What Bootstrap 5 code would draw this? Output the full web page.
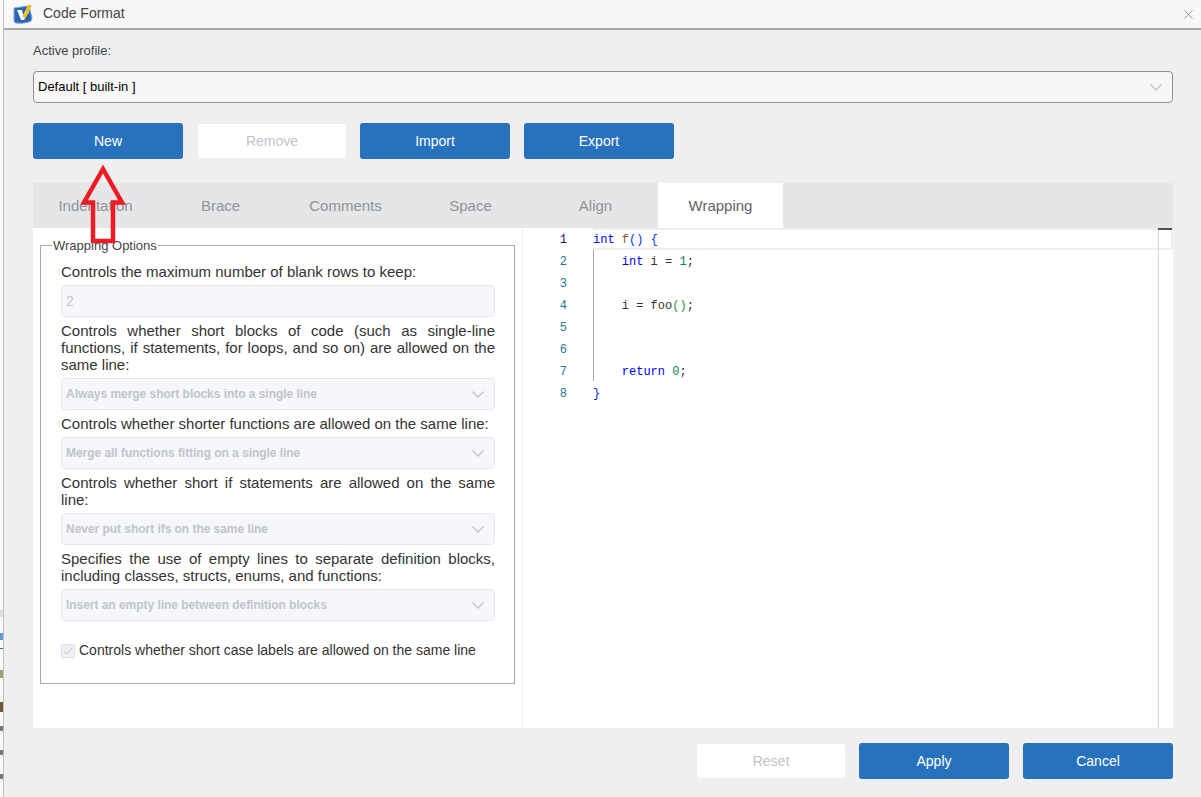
<!DOCTYPE html>
<html lang="en">

<head>
  <meta charset="UTF-8">
  <meta name="viewport" content="width=device-width, initial-scale=1.0">
  <title>Code Format</title>
  <link href="https://cdn.jsdelivr.net/npm/bootstrap@5.3.0/dist/css/bootstrap.min.css" rel="stylesheet">
  <style>
    html, body { height: 797px; overflow: hidden; }
    body { font-family: "Liberation Sans", Arial, sans-serif; font-size: 14px; color: #333; background: #fff; }
    .back-strip { width: 3px; height: 797px; flex: none; background: #fafafa; position: relative; }
    .back-strip div { position: absolute; left: 0; width: 3px; }
    .bit-band { top: 610px; height: 7px; background: #dcdcdc; }
    .bit-link { top: 633px; height: 7px; background: #5b9bd5; }
    .bit-rule { top: 648px; height: 1px; background: #2872bd; }
    .bit-tan { top: 670px; height: 8px; background: #a89a70; }
    .bit-dark { top: 702px; height: 10px; background: #6b5a3a; }
    .bit-c1 { top: 726px; height: 5px; background: #777; }
    .bit-c2 { top: 750px; height: 5px; background: #777; }
    .bit-c3 { top: 774px; height: 5px; background: #777; }
    .dialog-win { width: 1198px; height: 797px; flex: none; background: #efefef; border-left: 1px solid #c0c0c0; position: relative; }
    .title-bar { height: 30px; background: #f8f8f8; border-bottom: 2px solid #a6a6a6; padding-left: 9px; color: #444; }
    .title-bar span { margin: -2px 0 0 10px; font-size: 14px; }
    .close-x { margin-left: auto; margin-right: 8px; }
    .dlg-main { padding: 12px 28px 0 29px; }
    .profile-label { font-size: 13px; line-height: 18px; margin-bottom: 11px; color: #444; }
    .profile-select { height: 32px; border: 1px solid #8f8f8f; border-radius: 4px; background: #f7f7f7; padding: 0 4px; font-size: 13px; color: #000; margin-bottom: 20px; }
    .act-btn { width: 150px; height: 36px; border-radius: 3px; font-size: 14px; padding: 0; border: 0; }
    .act-blue { background: #2872bd; color: #fff; }
    .act-off { width: 148px; height: 34px; margin: 1px 0 1px 1px; background: #fff; color: #c0c4cc; }
    .top-btns { gap: 14px; margin-bottom: 24px; }
    .tab-row { height: 45px; background: #e5e6e8; }
    .tab-item { width: 125px; text-align: center; line-height: 45px; font-size: 15px; color: #909399; }
    .tab-item.on { background: #fff; color: #606266; }
    .tab-body { height: 500px; background: #fff; }
    .left-pane { width: 490px; flex: none; border-right: 1px solid #eee; padding: 17px 7px 0 7px; }
    .wrap-box { height: 439px; border: 1px solid #a9a9a9; padding: 17px 19px 0 20px; position: relative; }
    .wrap-legend { position: absolute; left: 11px; top: -8px; background: #fff; padding: 0 1px; font-size: 13px; line-height: 15px; color: #444; }
    .opt-text { font-size: 15px; line-height: 17px; text-align: justify; color: #333; margin: 0 0 5px; }
    .off-field { height: 32px; background: #f5f7fa; border: 1px solid #e4e7ed; border-radius: 4px; padding: 0 4px; color: #c0c4cc; font-size: 12px; font-weight: 700; letter-spacing: -0.04px; margin-bottom: 5px; }
    .off-num { font-size: 14px; font-weight: 400; }
    .field-arrow { margin-right: 6px; }
    .chk-row { margin-top: 19px; height: 21px; font-size: 14px; }
    .chk-box { width: 14px; height: 14px; border: 1px solid #dcdfe6; border-radius: 2px; background: #edf0f5; margin-right: 4px; }
    .code-pane { flex: 1; position: relative; font-family: "Liberation Mono", monospace; font-size: 12px; }
    .code-line { height: 22px; line-height: 24px; white-space: pre; }
    .ln { flex: none; width: 44px; text-align: right; color: #237893; }
    .cur .ln { color: #0b216f; }
    .ln-gap { flex: none; width: 26px; }
    .cur-text { flex: 1; line-height: 20px; border: solid #eee; border-width: 2px 2px 2px 0; }
    .k { color: #0000ff; }
    .kf { color: #795e26; }
    .num { color: #098658; }
    .br { color: #319331; }
    .br1 { color: #0431fa; }
    .indent-guide { position: absolute; left: 70px; top: 22px; height: 131px; width: 1px; background: #a8a8a8; }
    .wrap-guide { position: absolute; left: 635px; top: 0; height: 500px; width: 1px; background: #d4d4d4; }
    .wrap-mark { position: absolute; left: 635px; top: 0; width: 14px; height: 2px; background: #505050; }
    .dlg-foot { gap: 14px; margin-top: 15px; }
    .up-arrow { position: absolute; left: 74px; top: 162px; }
  </style>
</head>

<body>
  <div class="d-flex">
    <div class="back-strip">
      <div class="bit-band"></div>
      <div class="bit-link"></div>
      <div class="bit-rule"></div>
      <div class="bit-tan"></div>
      <div class="bit-dark"></div>
      <div class="bit-c1"></div>
      <div class="bit-c2"></div>
      <div class="bit-c3"></div>
    </div>
    <div class="dialog-win">
      <div class="title-bar d-flex align-items-center">
        <svg width="20" height="20" viewBox="0 0 20 20">
          <path d="M1 4 Q8 3 16 2 L19 14 Q19 17 16 18 Q9 20 3 19 Q1 19 1 16 Z" fill="#2a63b5" stroke="#7aa8e0" stroke-width="1"/>
          <path d="M4 6 L9 6 L10 11 L14 5 L16 8 L11 16 L8 16 Z" fill="#fff"/>
          <path d="M9.5 12 L15 1 L19 1 L12 15 Z" fill="#f4c01e"/>
        </svg>
        <span>Code Format</span>
        <svg class="close-x" width="9" height="9" viewBox="0 0 9 9"><path d="M0.5 0.5 L8.5 8.5 M8.5 0.5 L0.5 8.5" stroke="#999" stroke-width="1" fill="none"/></svg>
      </div>
      <div class="dlg-main">
        <div class="profile-label">Active profile:</div>
        <div class="profile-select d-flex align-items-center justify-content-between">
          <span>Default [ built-in ]</span>
          <svg class="field-arrow" width="12" height="7" viewBox="0 0 12 7"><path d="M0.5 0.5 L6 6 L11.5 0.5" stroke="#c0c4cc" stroke-width="1.3" fill="none"/></svg>
        </div>
        <div class="d-flex top-btns">
          <button class="act-btn act-blue">New</button>
          <button class="act-btn act-off">Remove</button>
          <button class="act-btn act-blue">Import</button>
          <button class="act-btn act-blue">Export</button>
        </div>
        <div class="d-flex tab-row">
          <div class="tab-item">Indentation</div>
          <div class="tab-item">Brace</div>
          <div class="tab-item">Comments</div>
          <div class="tab-item">Space</div>
          <div class="tab-item">Align</div>
          <div class="tab-item on">Wrapping</div>
        </div>
        <div class="d-flex tab-body">
          <div class="left-pane">
            <div class="wrap-box">
              <div class="wrap-legend">Wrapping Options</div>
              <p class="opt-text">Controls the maximum number of blank rows to keep:</p>
              <div class="off-field off-num d-flex align-items-center">2</div>
              <p class="opt-text">Controls whether short blocks of code (such as single-line functions, if statements, for loops, and so on) are allowed on the same line:</p>
              <div class="off-field d-flex align-items-center justify-content-between"><span>Always merge short blocks into a single line</span><svg class="field-arrow" width="12" height="7" viewBox="0 0 12 7"><path d="M0.5 0.5 L6 6 L11.5 0.5" stroke="#c0c4cc" stroke-width="1.3" fill="none"/></svg></div>
              <p class="opt-text">Controls whether shorter functions are allowed on the same line:</p>
              <div class="off-field d-flex align-items-center justify-content-between"><span>Merge all functions fitting on a single line</span><svg class="field-arrow" width="12" height="7" viewBox="0 0 12 7"><path d="M0.5 0.5 L6 6 L11.5 0.5" stroke="#c0c4cc" stroke-width="1.3" fill="none"/></svg></div>
              <p class="opt-text">Controls whether short if statements are allowed on the same line:</p>
              <div class="off-field d-flex align-items-center justify-content-between"><span>Never put short ifs on the same line</span><svg class="field-arrow" width="12" height="7" viewBox="0 0 12 7"><path d="M0.5 0.5 L6 6 L11.5 0.5" stroke="#c0c4cc" stroke-width="1.3" fill="none"/></svg></div>
              <p class="opt-text">Specifies the use of empty lines to separate definition blocks, including classes, structs, enums, and functions:</p>
              <div class="off-field d-flex align-items-center justify-content-between"><span>Insert an empty line between definition blocks</span><svg class="field-arrow" width="12" height="7" viewBox="0 0 12 7"><path d="M0.5 0.5 L6 6 L11.5 0.5" stroke="#c0c4cc" stroke-width="1.3" fill="none"/></svg></div>
              <div class="chk-row d-flex align-items-center">
                <span class="chk-box d-flex align-items-center justify-content-center"><svg width="10" height="8" viewBox="0 0 10 8"><path d="M1 4 L4 7 L9 1" stroke="#c0c4cc" fill="none"/></svg></span>
                <span>Controls whether short case labels are allowed on the same line</span>
              </div>
            </div>
          </div>
          <div class="code-pane">
            <div class="code-line cur d-flex"><span class="ln">1</span><span class="ln-gap"></span><span class="cur-text"><span class="k">int</span> <span class="kf">f</span><span class="br1">()</span> <span class="br1">{</span></span></div>
            <div class="code-line d-flex"><span class="ln">2</span><span class="ln-gap"></span><span>    <span class="k">int</span> i = <span class="num">1</span>;</span></div>
            <div class="code-line d-flex"><span class="ln">3</span></div>
            <div class="code-line d-flex"><span class="ln">4</span><span class="ln-gap"></span><span>    i = foo<span class="br">()</span>;</span></div>
            <div class="code-line d-flex"><span class="ln">5</span></div>
            <div class="code-line d-flex"><span class="ln">6</span></div>
            <div class="code-line d-flex"><span class="ln">7</span><span class="ln-gap"></span><span>    <span class="k">return</span> <span class="num">0</span>;</span></div>
            <div class="code-line d-flex"><span class="ln">8</span><span class="ln-gap"></span><span class="br1">}</span></div>
            <div class="indent-guide"></div>
            <div class="wrap-guide"></div>
            <div class="wrap-mark"></div>
          </div>
        </div>
        <div class="d-flex justify-content-end dlg-foot">
          <button class="act-btn act-off">Reset</button>
          <button class="act-btn act-blue">Apply</button>
          <button class="act-btn act-blue">Cancel</button>
        </div>
      </div>
      <svg class="up-arrow" width="50" height="85" viewBox="0 0 50 85">
        <path d="M25 7 L44 40.5 L35 40.5 L35 79 L15 79 L15 40.5 L6 40.5 Z" fill="none" stroke="#ed1c24" stroke-width="4.5" stroke-miterlimit="10"/>
      </svg>
    </div>
  </div>
  <script src="https://cdn.jsdelivr.net/npm/bootstrap@5.3.0/dist/js/bootstrap.bundle.min.js"></script>
</body>

</html>
